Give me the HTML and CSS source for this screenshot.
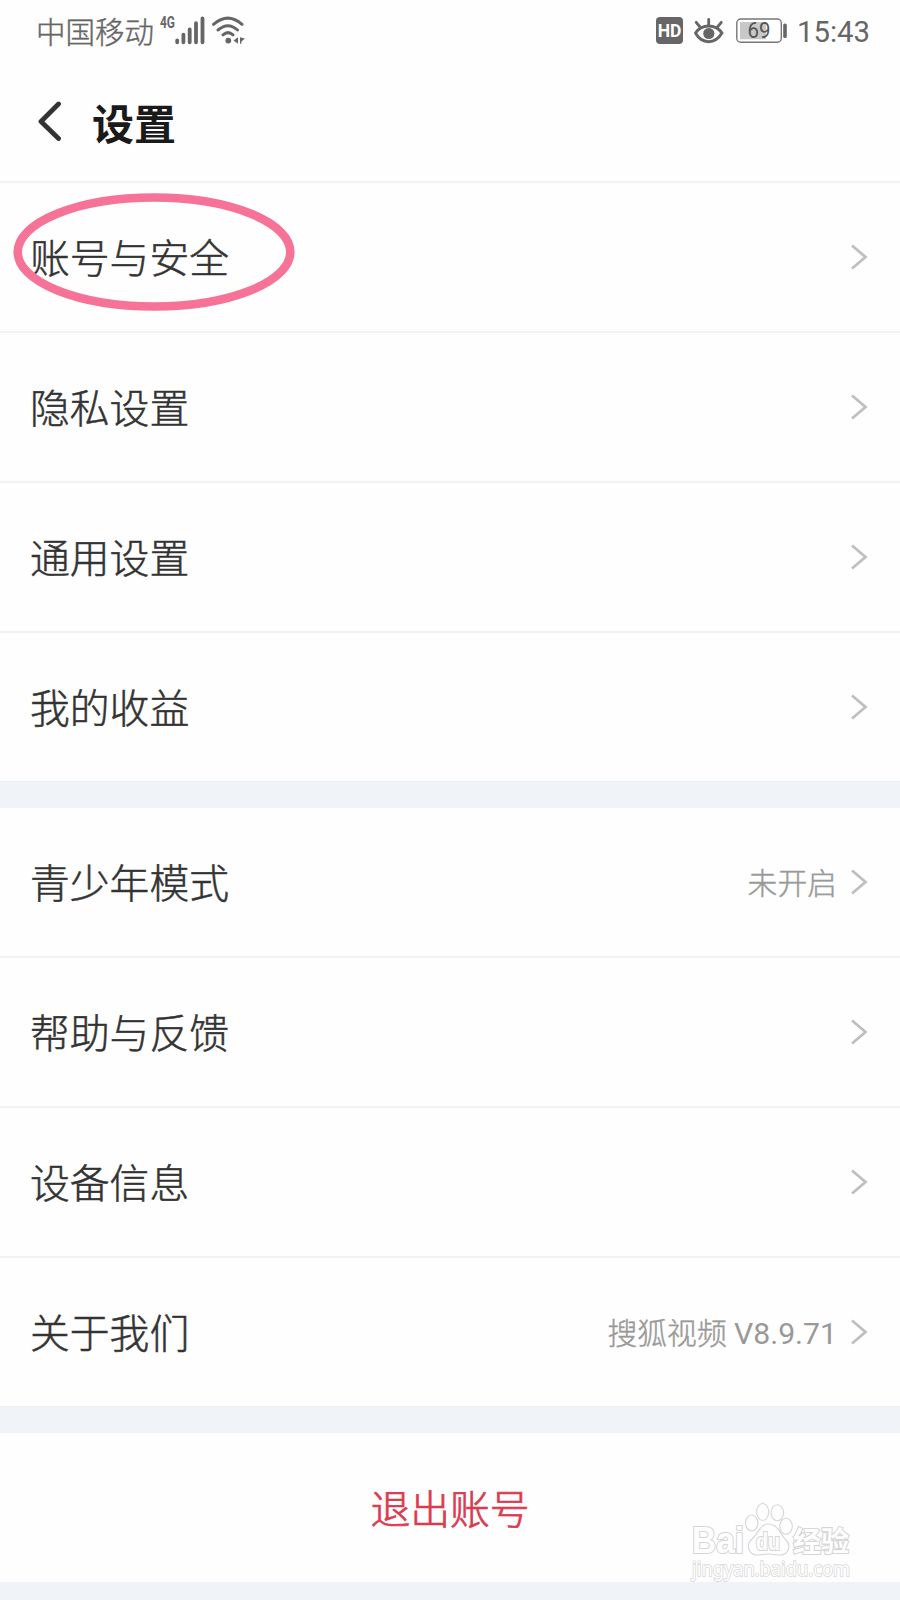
FILE: index.html
```html
<!DOCTYPE html>
<html lang="zh-CN">
<head>
    <meta charset="UTF-8">
    <meta name="viewport" content="width=device-width, initial-scale=1.0">
    <title>设置</title>
    <link rel="stylesheet" href="styles.css">
</head>
<body>
    <div class="status-bar">
        <div class="status-left">
            <span class="carrier">中国移动</span>
            <svg class="signal" width="88" height="36" viewBox="0 0 88 36">
                <text class="network" x="2" y="15" textLength="15" lengthAdjust="spacingAndGlyphs">4G</text>
                <g stroke="#666" stroke-width="3.8" stroke-linecap="round">
                    <path d="M19.2 27.5v1.8M25.4 21.7v7.6M31.7 16.3v13M38 10.2v19.1M44.5 5.3v24"/>
                </g>
                <g fill="none" stroke="#666" stroke-width="3" stroke-linecap="round">
                    <path d="M55.5 11.3Q70 -1 84 11.3M60 17Q70 8.5 79.5 17M65 21.8Q70 17.5 75 21.8"/>
                </g>
                <circle cx="70.3" cy="27.6" r="2.9" fill="#666"/>
                <path d="M80 24.2v6.6l-4.500-3.2zM82 24.2v6.6h1.3v-2l3.5-3.2z" fill="#666"/>
            </svg>
        </div>
        <div class="status-right">
            <span class="hd">HD</span>
            <svg class="eye" width="32" height="30" viewBox="0 0 32 30">
                <path d="M2.5 18C9 8.8 22 8.8 29 18C22 29.500 9 29.500 2.5 18Z" fill="none" stroke="#666" stroke-width="3" stroke-linejoin="round"/>
                <circle cx="15.8" cy="18.500" r="5.6" fill="#666"/>
                <path d="M15.7 10V4.500M7 12L3.2 7.3M24.5 12L28.3 7.3" stroke="#666" stroke-width="2.8" stroke-linecap="round"/>
            </svg>
            <svg class="battery" width="52" height="26" viewBox="0 0 52 26">
                <rect x="0.8" y="1" width="44.5" height="23.3" rx="4" fill="#fff" stroke="#777" stroke-width="1.4"/>
                <rect x="4" y="4" width="26" height="17.3" fill="#c8c8c8"/>
                <rect x="47.2" y="5.5" width="3.6" height="14.6" rx="1.6" fill="#666"/>
                <text class="level" x="11.5" y="20.2" textLength="23" lengthAdjust="spacingAndGlyphs">69</text>
            </svg>
            <span class="time">15:43</span>
        </div>
    </div>

    <div class="header">
        <svg class="back" width="26" height="42" viewBox="0 0 26 42">
            <path d="M21.5 3L4 20.5L21.5 37.500" fill="none" stroke="#333" stroke-width="4.8" stroke-linecap="round" stroke-linejoin="round"/>
        </svg>
        <h1>设置</h1>
    </div>

    <div class="group">
        <div class="row">
            <span class="label">账号与安全</span>
            <svg class="arrow" viewBox="0 0 18 28"><path d="M2 2.5L15.5 14L2 25.5"/></svg>
            <svg class="circle-mark" width="282" height="118" viewBox="0 0 282 118">
                <ellipse cx="141" cy="59" rx="136.3" ry="54.5"/>
            </svg>
        </div>
        <div class="row">
            <span class="label">隐私设置</span>
            <svg class="arrow" viewBox="0 0 18 28"><path d="M2 2.5L15.5 14L2 25.5"/></svg>
        </div>
        <div class="row">
            <span class="label">通用设置</span>
            <svg class="arrow" viewBox="0 0 18 28"><path d="M2 2.5L15.5 14L2 25.5"/></svg>
        </div>
        <div class="row">
            <span class="label">我的收益</span>
            <svg class="arrow" viewBox="0 0 18 28"><path d="M2 2.5L15.5 14L2 25.5"/></svg>
        </div>
    </div>

    <div class="group">
        <div class="row">
            <span class="label">青少年模式</span>
            <span class="value">未开启</span>
            <svg class="arrow" viewBox="0 0 18 28"><path d="M2 2.5L15.5 14L2 25.5"/></svg>
        </div>
        <div class="row">
            <span class="label">帮助与反馈</span>
            <svg class="arrow" viewBox="0 0 18 28"><path d="M2 2.5L15.5 14L2 25.5"/></svg>
        </div>
        <div class="row">
            <span class="label">设备信息</span>
            <svg class="arrow" viewBox="0 0 18 28"><path d="M2 2.5L15.5 14L2 25.5"/></svg>
        </div>
        <div class="row">
            <span class="label">关于我们</span>
            <span class="value">搜狐视频 <span class="version">V8.9.71</span></span>
            <svg class="arrow" viewBox="0 0 18 28"><path d="M2 2.5L15.5 14L2 25.5"/></svg>
        </div>
    </div>

    <div class="logout">退出账号</div>

    <svg class="watermark" width="180" height="94" viewBox="0 0 180 94">
        <g class="outline">
            <text class="brand" x="3" y="53" textLength="52" lengthAdjust="spacingAndGlyphs">Bai</text>
            <ellipse cx="62.7" cy="23" rx="6.2" ry="8"/>
            <ellipse cx="73.7" cy="12" rx="6" ry="8.5"/>
            <ellipse cx="88.3" cy="12.7" rx="6.3" ry="8"/>
            <ellipse cx="97" cy="26.3" rx="6.3" ry="8"/>
            <path d="M79.5 24C71 24 69 34 63 39C56 45 60 55 68 55C73 55 75 54 79.5 54C84 54 86 55 91 55C99 55 103 46 97 40C91 34 89 24 79.5 24Z"/>
            <text class="du" x="67" y="50" textLength="24" lengthAdjust="spacingAndGlyphs">du</text>
            <text class="name" x="104" y="51.5" textLength="56" lengthAdjust="spacingAndGlyphs">经验</text>
            <text class="url" x="3" y="75.5" textLength="158" lengthAdjust="spacingAndGlyphs">jingyan.baidu.com</text>
        </g>
    </svg>
</body>
</html>
```

FILE: styles.css
```css
* {
    box-sizing: border-box;
}
body {
    margin: 0;
    height: 1600px;
    overflow: hidden;
    position: relative;
    background: #f0f3f7;
    color: #333;
    font-family: Roboto, "Noto Sans CJK SC", sans-serif;
}
svg {
    display: block;
    flex: none;
}
.status-bar {
    display: flex;
    justify-content: space-between;
    height: 62px;
    padding: 0 30px 0 36px;
    background: #fefefe;
    color: #666;
}
.status-left, .status-right {
    display: flex;
    align-items: center;
    height: 62px;
}
.carrier {
    padding-bottom: 3px;
    font-size: 29.5px;
    font-weight: 300;
    -webkit-text-stroke: 0.4px #666;
}
.signal {
    margin: -1px 0 0 4px;
}
.network {
    font: bold 16px Roboto, sans-serif;
    fill: #666;
}
.hd {
    width: 27px;
    height: 27px;
    margin: -1px 10px 0 0;
    border-radius: 4px;
    background: #666;
    color: #fff;
    font-size: 17.5px;
    font-weight: bold;
    line-height: 28px;
    text-align: center;
}
.eye {
    margin: -3px 11px 0 0;
}
.battery {
    margin-top: -1px;
}
.level {
    font: 21.5px Roboto, sans-serif;
    fill: #555;
}
.time {
    padding-top: 1px;
    margin-left: 9px;
    font-size: 29.3px;
}
.header {
    display: flex;
    align-items: center;
    height: 121px;
    padding: 0 37px;
    background: #fefefe;
    border-bottom: 2px solid #f2f2f2;
}
.header h1 {
    margin: 8px 0 0 29px;
    color: #1a1a1a;
    font-size: 42px;
    font-weight: bold;
    line-height: 60px;
}
.group {
    margin-bottom: 26px;
}
.row {
    display: flex;
    align-items: center;
    position: relative;
    height: 150px;
    padding: 0 32px 0 30px;
    background: #fefefe;
    border-bottom: 2px solid #f2f2f2;
}
.row:last-child {
    height: 149px;
    border-bottom: 1px solid #ebeef0;
}
.label {
    flex: 1;
    padding-bottom: 3px;
    font-size: 39.8px;
    font-weight: 300;
    -webkit-text-stroke: 0.5px #333;
}
.value {
    margin-right: 13px;
    padding-bottom: 3px;
    color: #999;
    font-size: 29.8px;
    font-weight: 300;
    -webkit-text-stroke: 0.4px #999;
}
.version {
    font-size: 30.2px;
    font-weight: normal;
    -webkit-text-stroke: 0;
}
.arrow {
    width: 18px;
    height: 28px;
    fill: none;
    stroke: #bfbfbf;
    stroke-width: 2.8;
}
.circle-mark {
    position: absolute;
    left: 13px;
    top: 10px;
    fill: none;
    stroke: #f77297;
    stroke-width: 8.6;
}
.logout {
    height: 149px;
    padding-top: 3px;
    background: #fefefe;
    color: #dc3a4e;
    font-size: 39.8px;
    font-weight: 300;
    line-height: 149px;
    text-align: center;
    -webkit-text-stroke: 0.7px #dc3a4e;
}
.watermark {
    position: absolute;
    left: 689px;
    top: 1500px;
}
.outline {
    fill: #fefefe;
    stroke: #d6d6d6;
    stroke-width: 1.1;
}
.outline text {
    paint-order: stroke;
    stroke-width: 2.2;
}
.brand {
    font: bold 37px "Liberation Sans", sans-serif;
}
.du {
    font: bold 23px "Liberation Sans", sans-serif;
}
.name {
    font: bold 28px "Noto Sans CJK SC", sans-serif;
}
.outline .url {
    font: 20px "Noto Sans", sans-serif;
    stroke-width: 1.6;
}
```
